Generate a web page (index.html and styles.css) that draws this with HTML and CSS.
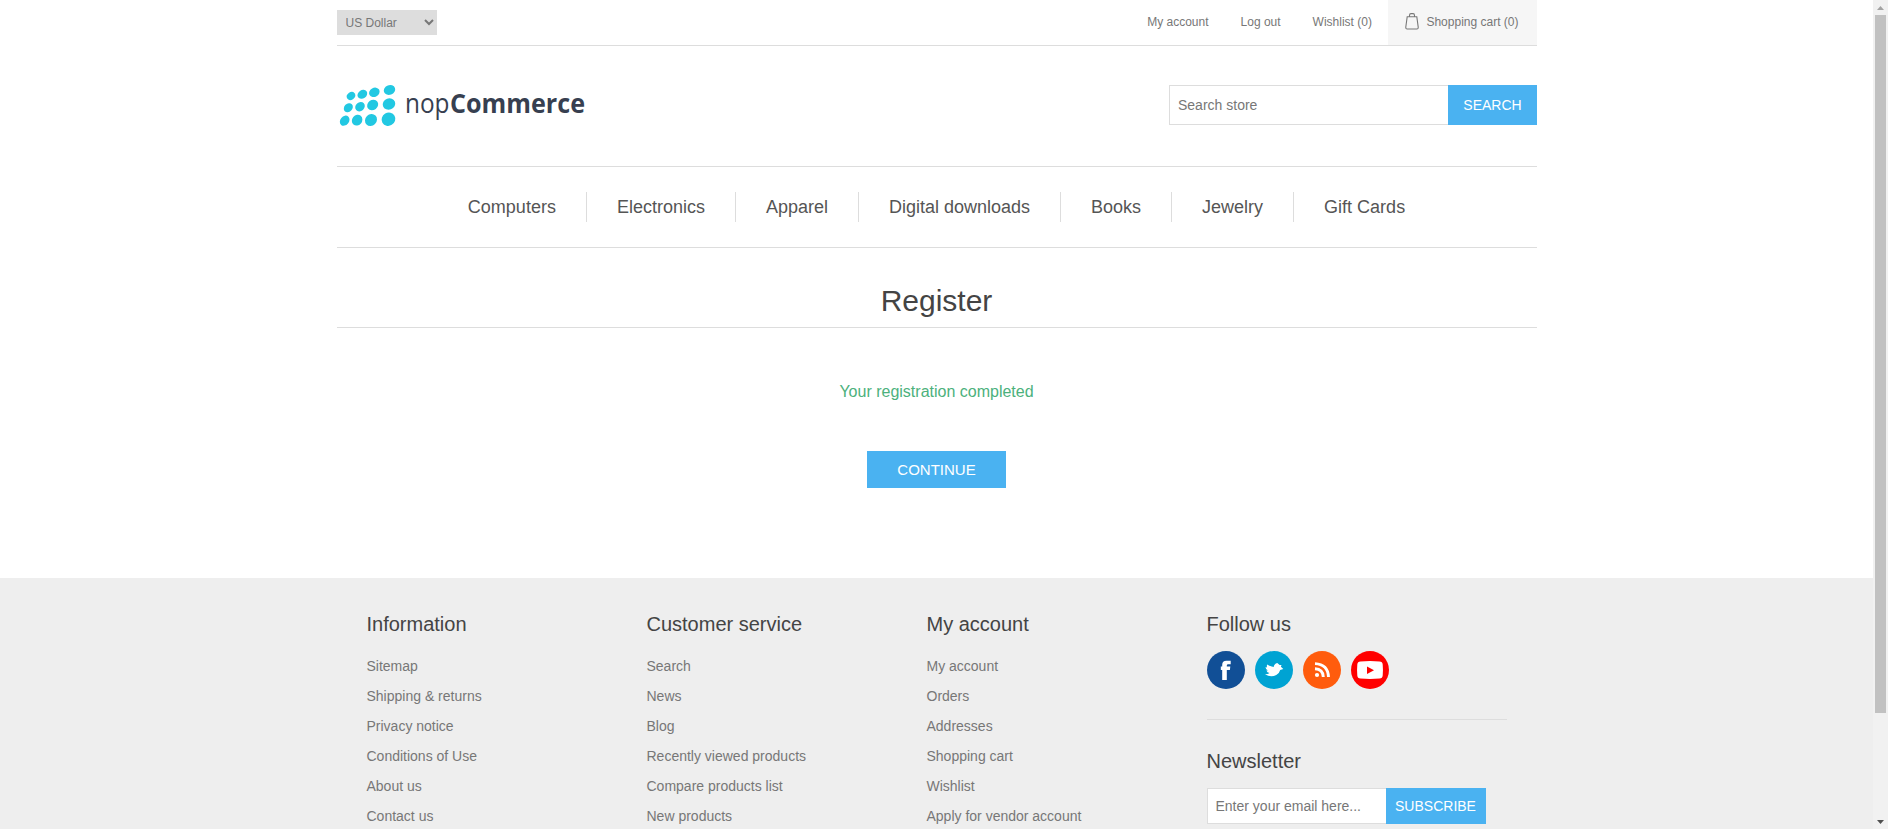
FILE: index.html
```html
<!DOCTYPE html>
<html lang="en">
<head>
<meta charset="utf-8">
<title>nopCommerce. Register</title>
<link rel="stylesheet" href="styles.css">
</head>
<body>
<div class="page">
  <header class="wrap">
    <div class="header-upper">
      <select class="currency"><option>US Dollar</option></select>
      <nav class="header-links">
        <a>My account</a><a>Log out</a><a>Wishlist (0)</a>
        <a class="cart"><svg width="14" height="17" viewBox="0 0 14 17" fill="none" stroke="#777" stroke-width="1.1"><path d="M2.2 3.8h9.6l1.4 10.2q.2 2-1.4 2H2.200q-1.600 0-1.400-2zM4.500 3.800V2.500q0-1.900 1.500-1.900h2q1.500 0 1.500 1.900v1.300"/></svg>Shopping cart (0)</a>
      </nav>
    </div>
    <div class="header-lower">
      <svg class="logo" width="260" height="60" viewBox="0 0 260 60">
        <g fill="#22c8e2" transform="translate(-2 5) scale(.3333)">
          <ellipse cx="48" cy="48" rx="13.500" ry="11" transform="rotate(-38 48 48)"/>
          <ellipse cx="82" cy="43" rx="15.500" ry="12.500" transform="rotate(-35 82 43)"/>
          <ellipse cx="118" cy="37" rx="16.500" ry="13.500" transform="rotate(-30 118 37)"/>
          <ellipse cx="163.500" cy="30" rx="17.500" ry="14.500" transform="rotate(-20 163 30)"/>
          <ellipse cx="40" cy="83" rx="15" ry="12" transform="rotate(-45 40 83)"/>
          <ellipse cx="75" cy="80" rx="15.500" ry="13" transform="rotate(-42 75 80)"/>
          <ellipse cx="113" cy="75" rx="17.500" ry="15" transform="rotate(-38 113 75)"/>
          <ellipse cx="162" cy="72" rx="19" ry="17" transform="rotate(-20 162 72)"/>
          <ellipse cx="29" cy="122" rx="16.500" ry="13" transform="rotate(-50 29 122)"/>
          <ellipse cx="66.500" cy="121" rx="17" ry="15" transform="rotate(-50 66 121)"/>
          <ellipse cx="108" cy="120" rx="19" ry="17" transform="rotate(-45 108 120)"/>
          <ellipse cx="160.500" cy="118" rx="21" ry="19.500" transform="rotate(-30 160 118)"/>
        </g>
        <text class="logo-light" x="68" y="37.500" textLength="44.500" lengthAdjust="spacingAndGlyphs">nop</text>
        <text class="logo-bold" x="113" y="37.500" textLength="135" lengthAdjust="spacingAndGlyphs">Commerce</text>
      </svg>
      <form class="search">
        <input type="text" placeholder="Search store"><button type="button">SEARCH</button>
      </form>
    </div>
  </header>
  <nav class="wrap menu">
    <a>Computers</a><a>Electronics</a><a>Apparel</a><a>Digital downloads</a><a>Books</a><a>Jewelry</a><a>Gift Cards</a>
  </nav>
  <main class="wrap">
    <h1>Register</h1>
    <div class="result">Your registration completed</div>
    <button class="continue" type="button">CONTINUE</button>
  </main>
  <footer>
    <div class="wrap footer-upper">
      <div class="block"><h2>Information</h2>
        <ul><li>Sitemap</li><li>Shipping &amp; returns</li><li>Privacy notice</li><li>Conditions of Use</li><li>About us</li><li>Contact us</li></ul></div>
      <div class="block"><h2>Customer service</h2>
        <ul><li>Search</li><li>News</li><li>Blog</li><li>Recently viewed products</li><li>Compare products list</li><li>New products</li></ul></div>
      <div class="block"><h2>My account</h2>
        <ul><li>My account</li><li>Orders</li><li>Addresses</li><li>Shopping cart</li><li>Wishlist</li><li>Apply for vendor account</li></ul></div>
      <div class="block follow"><h2>Follow us</h2>
        <div class="social">
          <svg viewBox="0 0 38 38"><circle cx="19" cy="19" r="19" fill="#114f96"/><path fill="#fff" d="M15.200 29V18.900H13.800V15.600h1.400V13.800q0-4 4.200-4h4.300v3.400h-2.500q-1.400 0-1.400 1.400v1h3.500l-.4 3.300h-3.100V29z"/></svg>
          <svg viewBox="0 0 38 38"><circle cx="19" cy="19" r="19" fill="#00a3d3"/><path fill="#fff" d="M10 23.300q3.300 0 4.500-1.200-2.400-.5-3.100-2.600h1.500q-2.400-1.200-2.400-3.500l1.600.4q-.6-1.300.1-3 2.300 1.700 6.500 2.500.4-3.200 3.600-4l2.300 2.200 1.900-.2-.6 1.900 2.400 2.200-3.100 1.100q-.8 3.400-3.900 4.800-5.400 2.800-11.300-.6z"/></svg>
          <svg viewBox="0 0 38 38"><circle cx="19" cy="19" r="19" fill="#ff5c0d"/><circle cx="14" cy="24" r="2.100" fill="#fff"/><path fill="none" stroke="#fff" stroke-width="2.900" d="M12 17.800q8 .4 8.300 8.200M12 12.600q13 .7 13.500 13.400"/></svg>
          <svg viewBox="0 0 38 38"><circle cx="19" cy="19" r="19" fill="#f00"/><path fill="#fff" d="M9.500 10.500q9.500-.8 19 0 3 .2 3.200 3 .5 5.500 0 11-.2 2.800-3.200 3-9.500.8-19 0-3-.2-3.200-3-.5-5.500 0-11 .2-2.800 3.200-3z"/><path fill="#f00" d="M16 15.500v7.400l7-3.700z"/></svg>
        </div>
        <div class="newsletter"><h2>Newsletter</h2>
          <form><input type="text" placeholder="Enter your email here..."><button type="button">SUBSCRIBE</button></form>
        </div>
      </div>
    </div>
  </footer>
</div>
<div class="scrollbar">
  <svg width="15" height="15" viewBox="0 0 15 15"><path fill="#a3a3a3" d="M4 10h7L7.500 6z"/></svg>
  <div class="thumb"></div>
  <svg width="15" height="15" viewBox="0 0 15 15"><path fill="#505050" d="M4 6h7L7.500 10z"/></svg>
</div>
</body>
</html>
```
FILE: styles.css
```css
* { box-sizing: border-box; margin: 0; padding: 0; border-radius: 0; }
body {
  display: flex; height: 829px; overflow: hidden; background: #fff;
  font: 14px "Liberation Sans", Arial, sans-serif; color: #777;
}
input, select, button { font: inherit; outline: none; }
.page { flex: 1; height: 829px; overflow: hidden; }
.wrap { width: 1200px; margin: 0 auto; }

.header-upper {
  display: flex; justify-content: space-between; height: 46px;
  border-bottom: 1px solid #ddd; font-size: 12px;
}
.currency {
  width: 100px; height: 25px; margin-top: 10px; padding: 0 4px 0 5px;
  border: 0; background: #ddd; color: #777;
}
.header-links { display: flex; line-height: 45px; }
.header-links a { padding: 0 16px; height: 45px; line-height: 44px; }
.header-links .cart {
  display: flex; align-items: flex-start; padding: 0 18px 0 17.500px;
  background: #f6f6f6;
}
.cart svg { margin: 12.500px 7px 0 0; }

.header-lower { display: flex; justify-content: space-between; padding: 39px 0 0; height: 120px; }
.logo { margin-top: -10px; overflow: visible; }
.logo-light, .logo-bold { font-family: "Open Sans", sans-serif; font-size: 27.500px; fill: #373f50; }
.logo-bold { font-weight: 700; }
.search { display: flex; height: 40px; }
.search input { width: 279px; padding: 0 8.500px; border: 1px solid #ddd; border-right: 0; }
input::placeholder { color: #777; opacity: 1; }
.search button, .newsletter button { border: 0; background: #4ab2f1; color: #fff; }
.search button { width: 89px; padding-left: 1px; }

.menu {
  display: flex; justify-content: center; padding: 25px 0; height: 82px;
  border: solid #ddd; border-width: 1px 0; font-size: 18px; color: #555;
}
.menu a { padding: 0 30px; line-height: 30px; }
.menu a + a { border-left: 1px solid #ddd; }

main { height: 330px; text-align: center; }
h1 {
  height: 80px; padding-top: 35px; border-bottom: 1px solid #ddd;
  font-size: 30px; font-weight: 400; line-height: 36px; color: #444;
}
.result { margin-top: 54px; line-height: 20px; font-size: 16px; color: #4cb17c; }
.continue {
  width: 139px; height: 37px; margin-top: 49px; border: 0;
  background: #4ab2f1; color: #fff; font-size: 15px;
}

footer { height: 400px; background: #eee; }
.footer-upper { display: flex; padding: 30px 30px 0; }
.block { width: 280px; }
.follow { width: 300px; }
h2 { font-size: 20px; font-weight: 400; line-height: 32px; color: #444; }
ul { list-style: none; margin-top: 11px; }
li { line-height: 30px; }
.social { display: flex; gap: 10px; margin-top: 11px; }
.social svg { width: 38px; height: 38px; }
.newsletter { margin-top: 30px; padding-top: 25px; border-top: 1px solid #ddd; }
.newsletter form { display: flex; height: 36px; margin-top: 11px; }
.newsletter input { width: 179px; padding: 0 8px; border: 1px solid #ddd; border-right: 0; }
.newsletter button { width: 100px; }

.scrollbar { display: flex; flex-direction: column; width: 15px; height: 829px; background: #f1f1f1; }
.thumb { width: 11px; height: 698px; margin: 0 auto; background: #c1c1c1; }
.scrollbar svg:last-child { margin-top: auto; }
```
